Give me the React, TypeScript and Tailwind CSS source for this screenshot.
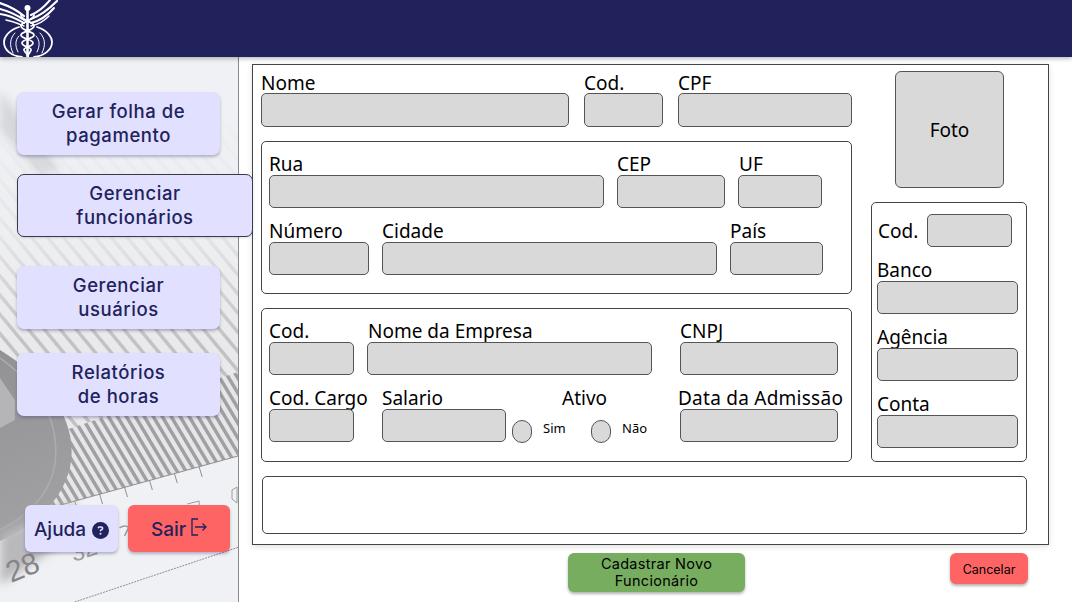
import React from 'react';
import { FaCircleQuestion } from 'react-icons/fa6';

const Logo = () => (
  <svg width="60" height="57" viewBox="0 0 60 57" fill="none" stroke="white" strokeLinecap="round">
    {/* wings */}
    <path d="M24 23C17 19 9 15 0 14" strokeWidth="2" />
    <path d="M24 20C17 15 8 11 0 9" strokeWidth="2" />
    <path d="M24 16C18 11 9 6 0 3" strokeWidth="2.2" />
    <path d="M24 26C19 24 12 21 6 20" strokeWidth="1.5" />
    <path d="M31 23C39 21 48 15 54 8" strokeWidth="2" />
    <path d="M31 19C40 16 49 9 57 1" strokeWidth="2.2" />
    <path d="M31 15C38 12 45 6 50 0" strokeWidth="2" />
    <path d="M31 26C37 25 44 21 49 16" strokeWidth="1.5" />
    {/* ring */}
    <path d="M19 27C9 30 4 37 4 42C4 50 11 56 22 57" strokeWidth="1.8" />
    <path d="M37 27C47 30 52 37 52 42C52 50 44 56 34 57" strokeWidth="1.8" />
    <path d="M15 33C10 38 9 45 13 53" strokeWidth="1" />
    <path d="M19 36C15 40 15 46 18 52" strokeWidth="1" />
    <path d="M40 33C45 38 46 45 42 53" strokeWidth="1" />
    <path d="M36 36C40 40 40 46 37 52" strokeWidth="1" />
    {/* staff and snakes */}
    <circle cx="27.5" cy="8" r="3" fill="white" stroke="none" />
    <path d="M27.5 10V56" strokeWidth="2.6" />
    <path d="M21 15C21 21 34 21 34 26C34 31 21 31 21 35C21 39 33 39 33 43C33 47 23 47 24 50C25 53 28 54 28 56" strokeWidth="1.8" />
    <path d="M34 15C34 21 21 21 21 26C21 31 34 31 34 35C34 39 22 39 22 43C22 47 32 47 31 50C30 53 28 54 28 56" strokeWidth="1.8" />
  </svg>
);

const SidebarPhoto = () => {
  const stripes = Array.from({ length: 44 }, (_, i) => -420 + i * 16);
  const bars = Array.from({ length: 40 }, (_, i) => -60 + i * 9);
  return (
    <svg className="absolute inset-0 h-full w-full" viewBox="0 57 239 545" preserveAspectRatio="none">
      <defs>
        <linearGradient id="fade" x1="0" y1="110" x2="0" y2="340" gradientUnits="userSpaceOnUse">
          <stop offset="0" stopColor="white" stopOpacity="0" />
          <stop offset="0.55" stopColor="white" stopOpacity="0.25" />
          <stop offset="1" stopColor="white" stopOpacity="1" />
        </linearGradient>
        <mask id="stripeMask">
          <rect x="0" y="57" width="239" height="545" fill="url(#fade)" />
        </mask>
        <clipPath id="aboveEdge">
          <path d="M0 57H239V456L50 508L0 525Z" />
        </clipPath>
        <clipPath id="barRegion">
          <path d="M60 432L239 372V456L50 508Z" />
        </clipPath>
        <linearGradient id="blob" x1="0" y1="350" x2="70" y2="540" gradientUnits="userSpaceOnUse">
          <stop offset="0" stopColor="#929294" />
          <stop offset="1" stopColor="#a3a3a5" />
        </linearGradient>
        <filter id="soft">
          <feGaussianBlur stdDeviation="5" />
        </filter>
        <filter id="slight">
          <feGaussianBlur stdDeviation="0.5" />
        </filter>
      </defs>
      <rect x="0" y="57" width="239" height="545" fill="#f0f1f4" />
      <path d="M0 90L60 170L40 175L0 130Z" fill="#d6d7da" filter="url(#soft)" />
      <g clipPath="url(#aboveEdge)">
        <g mask="url(#stripeMask)">
          <rect x="0" y="57" width="239" height="480" fill="#e9e9eb" />
          <g stroke="#c2c2c5" strokeWidth="3.5" filter="url(#slight)">
            {stripes.map((x) => (
              <line key={x} x1={x} y1="60" x2={x + 400} y2="540" />
            ))}
          </g>
        </g>
        <g clipPath="url(#barRegion)">
          <rect x="0" y="360" width="239" height="160" fill="#e6e6e8" />
          <g stroke="#a0a0a3" strokeWidth="3.5" filter="url(#slight)">
            {bars.map((x) => (
              <line key={x} x1={x} y1="360" x2={x + 96} y2="520" />
            ))}
          </g>
        </g>
      </g>
      {/* paper edge ticks */}
      <path d="M50 508L239 456" stroke="#8f8f92" strokeWidth="1" />
      <g stroke="#8f8f92" strokeWidth="1">
        <line x1="75" y1="501" x2="78" y2="511" />
        <line x1="100" y1="494" x2="103" y2="504" />
        <line x1="125" y1="487" x2="128" y2="497" />
        <line x1="150" y1="480" x2="153" y2="490" />
        <line x1="175" y1="473" x2="178" y2="483" />
        <line x1="200" y1="467" x2="203" y2="477" />
      </g>
      <path d="M233 490L238 487V503L233 499Z" fill="none" stroke="#9c9c9f" />
      <path d="M188 504L200 501V507" fill="none" stroke="#9c9c9f" />
      {/* stapler shape */}
      <path d="M0 350C40 375 72 410 72 452C72 490 40 525 0 541Z" fill="url(#blob)" />
      <path d="M0 378L15 400V420L0 428Z" fill="#b5b5b7" />
      <path d="M0 358C38 385 56 415 56 452C56 490 30 515 0 530" fill="none" stroke="#adadaf" strokeWidth="1.5" />
      <path d="M0 535C30 520 60 505 78 505L60 545L0 585Z" fill="#b9b9bc" filter="url(#soft)" />
      <path d="M75 602L240 547" fill="none" stroke="#8c8c8f" strokeWidth="1" strokeDasharray="2 1" />
      <path d="M120 528C124 525 129 526 129 528L125 536" fill="none" stroke="#9a9a9d" strokeWidth="1.5" />
      <text
        x="11"
        y="583"
        fontSize="30"
        fill="#858588"
        fontFamily="Liberation Sans, sans-serif"
        transform="rotate(-22 11 583)"
      >
        28
      </text>
      <text
        x="74"
        y="562"
        fontSize="24"
        fill="#a0a0a3"
        fontFamily="Liberation Sans, sans-serif"
        transform="rotate(-18 74 562)"
      >
        32
      </text>
    </svg>
  );
};

const ExitIcon = () => (
  <svg width="16" height="18" viewBox="0 0 16 18" fill="none" stroke="#22225c" strokeWidth="1.3" className="-mt-[6px]">
    <path d="M7 1H1V17H7" />
    <path d="M4 9H15M11.5 5.5L15 9L11.5 12.5" />
  </svg>
);

const NavButton = ({ lines, active }: { lines: string[]; active?: boolean }) => (
  <button
    className={`flex h-[63px] flex-col items-center justify-center rounded-[7px] bg-[#e1e0ff] pb-[1px] text-[18.5px] leading-[24px] font-medium tracking-[0.03em] text-[#22225c] ${
      active
        ? 'z-10 w-[236px] border border-[#3a3a4a] shadow-sm'
        : 'w-[203px] shadow-[0_2px_3px_rgba(60,60,110,0.35)]'
    }`}
  >
    {lines.map((l) => (
      <span key={l}>{l}</span>
    ))}
  </button>
);

const Input = ({ className }: { className: string }) => (
  <div className={`rounded-[5px] border border-[#555] bg-[#d9d9d9] ${className}`} />
);

const Field = ({
  label,
  width,
  labelClass,
  inputHeight,
}: {
  label: string;
  width: string;
  labelClass?: string;
  inputHeight?: string;
}) => (
  <div className={`flex shrink-0 flex-col ${width}`}>
    <span className={`h-[22px] text-[19px] whitespace-nowrap text-black ${labelClass ?? 'leading-[22px]'}`}>{label}</span>
    <Input className={`w-full ${inputHeight ?? 'h-[33px]'}`} />
  </div>
);

const Radio = ({ label, gap }: { label: string; gap: string }) => (
  <div className={`flex items-start ${gap}`}>
    <div className="h-[23px] w-[20px] rounded-full border border-[#555] bg-[#d9d9d9]" />
    <span className="mt-[-1px] text-[13px] leading-[18px] text-black">{label}</span>
  </div>
);

const topLabel = 'leading-[24px]';

export default function App() {
  return (
    <div className="flex h-[602px] w-[1072px] flex-col overflow-hidden bg-white font-['Inter',sans-serif]">
      <header className="z-20 flex h-[57px] shrink-0 bg-[#21215b] shadow-[0_2px_4px_rgba(0,0,0,0.25)]">
        <Logo />
      </header>

      <div className="flex min-h-0 flex-1">
        <aside className="relative flex w-[239px] shrink-0 flex-col border-r border-[#8a8a8a] pt-[35px] pl-[17px]">
          <SidebarPhoto />
          <div className="relative flex flex-col">
            <NavButton lines={['Gerar folha de', 'pagamento']} />
            <div className="mt-[19px]">
              <NavButton lines={['Gerenciar', 'funcionários']} active />
            </div>
            <div className="mt-[29px]">
              <NavButton lines={['Gerenciar', 'usuários']} />
            </div>
            <div className="mt-[24px]">
              <NavButton lines={['Relatórios', 'de horas']} />
            </div>
          </div>
          <div className="relative mt-[89px] ml-[8px] flex gap-[10px]">
            <button className="flex h-[47px] w-[93px] items-center justify-center gap-[6px] rounded-[6px] bg-[#e1e0ff] pt-[3px] text-[19px] font-medium text-[#22225c] shadow-[0_2px_3px_rgba(60,60,110,0.35)]">
              Ajuda
              <FaCircleQuestion size={17} color="#22225c" />
            </button>
            <button className="flex h-[47px] w-[102px] items-center justify-center gap-[5px] rounded-[6px] bg-[#ff6464] pt-[3px] text-[19px] font-medium text-[#22225c] shadow-[0_2px_3px_rgba(60,60,110,0.35)]">
              Sair
              <ExitIcon />
            </button>
          </div>
        </aside>

        <main className="flex flex-1 flex-col pt-[7px] pl-[13px] font-['Noto_Sans',sans-serif]">
          <div className="flex h-[481px] w-[797px] flex-col border border-[#444] bg-white pt-[6px] pl-[8px] shadow-[0_2px_6px_rgba(0,0,0,0.12)]">
            <div className="flex">
              <div className="flex w-[591px] flex-col">
                <div className="flex gap-[15px]">
                  <Field label="Nome" width="w-[308px]" labelClass={topLabel} inputHeight="h-[34px]" />
                  <Field label="Cod." width="w-[79px]" labelClass={topLabel} inputHeight="h-[34px]" />
                  <Field label="CPF" width="w-[174px]" labelClass={topLabel} inputHeight="h-[34px]" />
                </div>

                <section className="mt-[14px] flex h-[153px] flex-col gap-[12px] rounded-[5px] border border-[#444] pt-[11px] pl-[7px]">
                  <div className="flex gap-[13px]">
                    <Field label="Rua" width="w-[335px]" />
                    <Field label="CEP" width="w-[108px]" />
                    <Field label="UF" width="w-[84px]" labelClass="ml-[1px] leading-[22px]" />
                  </div>
                  <div className="flex gap-[13px]">
                    <Field label="Número" width="w-[100px]" />
                    <Field label="Cidade" width="w-[335px]" />
                    <Field label="País" width="w-[93px]" />
                  </div>
                </section>

                <section className="mt-[14px] flex h-[154px] flex-col gap-[12px] rounded-[5px] border border-[#444] pt-[11px] pl-[7px]">
                  <div className="flex">
                    <Field label="Cod." width="w-[85px]" />
                    <Field label="Nome da Empresa" width="ml-[13px] w-[285px]" labelClass="ml-[1px] leading-[22px]" />
                    <Field label="CNPJ" width="ml-[28px] w-[158px]" />
                  </div>
                  <div className="flex">
                    <Field label="Cod. Cargo" width="w-[85px]" />
                    <Field label="Salario" width="ml-[28px] w-[124px]" />
                    <div className="relative ml-[6px] w-[168px]">
                      <span className="absolute top-0 left-[50px] text-[19px] leading-[22px] text-black">Ativo</span>
                      <div className="flex pt-[33px]">
                        <Radio label="Sim" gap="w-[79px] gap-[11px]" />
                        <Radio label="Não" gap="gap-[11px]" />
                      </div>
                    </div>
                    <Field
                      label="Data da Admissão"
                      width="w-[158px]"
                      labelClass="-ml-[2px] leading-[22px] tracking-[0.25px]"
                    />
                  </div>
                </section>
              </div>

              <div className="ml-[19px] flex w-[156px] flex-col">
                <div className="ml-[24px] flex h-[117px] w-[109px] items-center justify-center rounded-[6px] border border-[#555] bg-[#d9d9d9] pt-[1px] text-[19px] text-black">
                  Foto
                </div>
                <section className="mt-[14px] flex h-[260px] flex-col rounded-[5px] border border-[#444] pt-[11px] pl-[5px]">
                  <div className="flex items-center">
                    <span className="ml-[1px] w-[49px] text-[19px] leading-[22px] text-black">Cod.</span>
                    <Input className="h-[33px] w-[85px]" />
                  </div>
                  <div className="mt-[12px] flex w-[141px] flex-col gap-[12px]">
                    <Field label="Banco" width="w-full" />
                    <Field label="Agência" width="w-full" />
                    <Field label="Conta" width="w-full" />
                  </div>
                </section>
              </div>
            </div>
            <div className="mt-[14px] ml-[1px] h-[58px] w-[765px] rounded-[5px] border border-[#444] bg-white" />
          </div>

          <div className="flex items-start pt-[8px]">
            <button className="ml-[316px] h-[39px] w-[177px] rounded-[6px] bg-[#76ad5f] pb-[2px] font-['Inter',sans-serif] text-[14.5px] leading-[17px] tracking-[0.02em] text-black shadow-[0_2px_3px_rgba(0,0,0,0.3)]">
              <span className="block">Cadastrar Novo</span>
              <span className="block">Funcionário</span>
            </button>
            <button className="ml-[205px] h-[31px] w-[78px] rounded-[6px] bg-[#ff6464] pt-[3px] font-['Inter',sans-serif] text-[12.5px] text-black shadow-[0_2px_3px_rgba(0,0,0,0.3)]">
              Cancelar
            </button>
          </div>
        </main>
      </div>
    </div>
  );
}
